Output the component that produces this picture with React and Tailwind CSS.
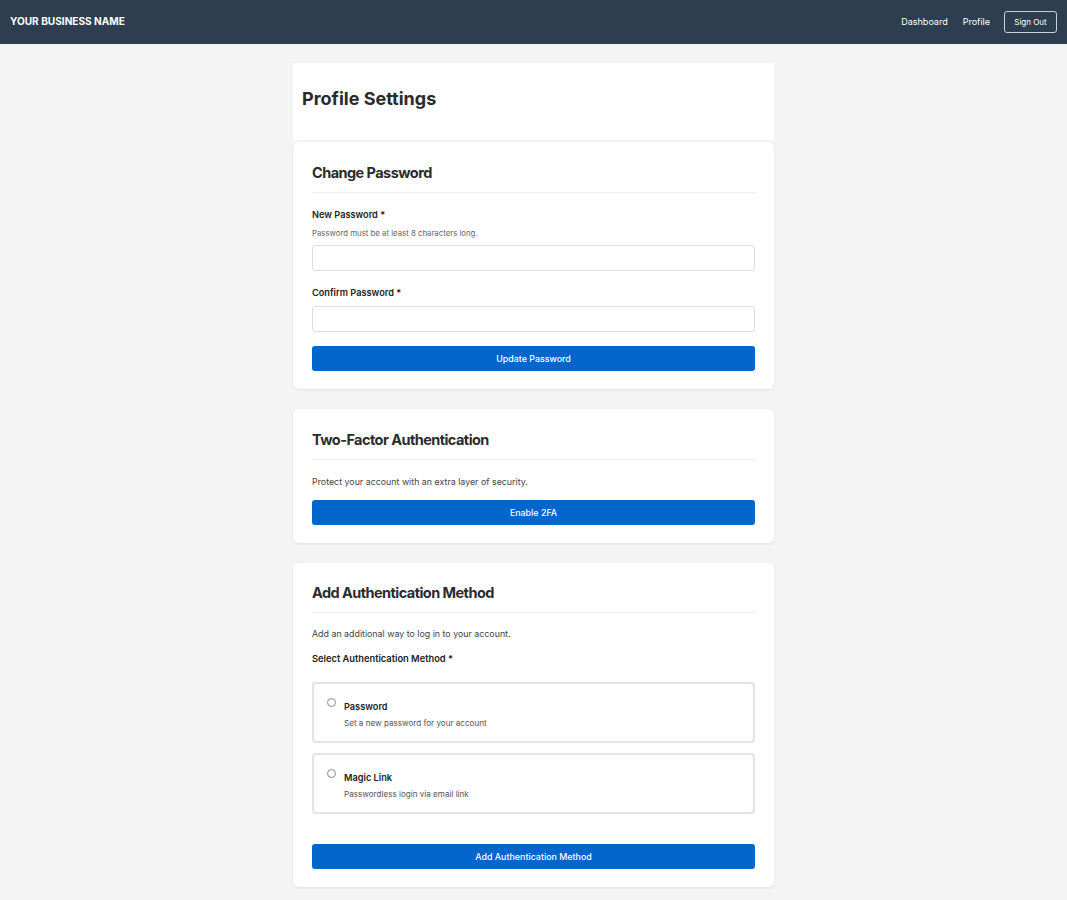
import React from "react";

function Option({ title, desc, mt }) {
  return (
    <label className={`${mt} flex items-start rounded-[4px] border-2 border-[#e3e3e3] bg-white pl-[13px] pr-4 pt-[12px] pb-[11px]`}>
      <span className="mt-[2px] h-[9px] w-[9px] shrink-0 rounded-full border border-[#8a8a8a] bg-white" />
      <span className="ml-[8px] flex flex-col">
        <span className="mt-[3px] text-[9.2px] font-semibold leading-[16px] text-[#222]">{title}</span>
        <span className="mt-[1px] text-[8.1px] leading-[14px] text-[#555]">{desc}</span>
      </span>
    </label>
  );
}

function Button({ children, mt }) {
  return (
    <button className={`${mt} flex h-[25px] w-full items-center justify-center rounded-[3px] bg-[#0066cc] text-[8.9px] font-medium text-white`}>
      {children}
    </button>
  );
}

function CardTitle({ children }) {
  return (
    <h2 className="border-b border-[#eeeeee] pb-[8px] text-[14.5px] font-bold leading-[22px] tracking-[-0.55px] text-[#2b2b2b]">
      {children}
    </h2>
  );
}

export default function App() {
  return (
    <div className="min-h-[900px] bg-[#f4f4f4] pb-10" style={{ fontFamily: "Inter, 'Liberation Sans', sans-serif" }}>
      <header className="flex h-[44px] items-center justify-between bg-[#2c3e50] pl-[10px] pr-[10px]">
        <div className="text-[10.1px] font-bold text-white">YOUR BUSINESS NAME</div>
        <nav className="flex items-center text-[9px] text-white">
          <a className="mr-[15px]">Dashboard</a>
          <a className="mr-[14px]">Profile</a>
          <button className="h-[22px] w-[53px] rounded-[3px] border border-[#c9d0d6] text-[8px] text-white">Sign Out</button>
        </nav>
      </header>

      <main className="mx-auto mt-[19px] w-[481px]">
        <div className="flex h-[77px] items-center bg-white px-[9px] pb-[6px]">
          <h1 className="text-[18px] font-bold text-[#2b2b2b]">Profile Settings</h1>
        </div>

        <section className="mt-[2px] rounded-[6px] bg-white px-[19px] pt-[20px] pb-[18px] shadow-[0_1px_3px_rgba(0,0,0,0.08)]">
          <CardTitle>Change Password</CardTitle>
          <div className="mt-[14px] text-[9.2px] font-semibold leading-[16px] text-[#222]">New Password *</div>
          <div className="mt-[3px] text-[7.8px] leading-[14px] text-[#666]">Password must be at least 8 characters long.</div>
          <input type="password" className="mt-[5px] block h-[26px] w-full rounded-[3px] border border-[#dddddd] bg-white" />
          <div className="mt-[14px] text-[9.2px] font-semibold leading-[16px] text-[#222]">Confirm Password *</div>
          <input type="password" className="mt-[5px] block h-[26px] w-full rounded-[3px] border border-[#dddddd] bg-white" />
          <Button mt="mt-[14px]">Update Password</Button>
        </section>

        <section className="mt-[20px] rounded-[6px] bg-white px-[19px] pt-[20px] pb-[18px] shadow-[0_1px_3px_rgba(0,0,0,0.08)]">
          <CardTitle>Two-Factor Authentication</CardTitle>
          <p className="mt-[13px] text-[8.85px] leading-[18px] text-[#444]">Protect your account with an extra layer of security.</p>
          <Button mt="mt-[9px]">Enable 2FA</Button>
        </section>

        <section className="mt-[20px] rounded-[6px] bg-white px-[19px] pt-[19px] pb-[18px] shadow-[0_1px_3px_rgba(0,0,0,0.08)]">
          <CardTitle>Add Authentication Method</CardTitle>
          <p className="mt-[12px] text-[8.85px] leading-[18px] text-[#444]">Add an additional way to log in to your account.</p>
          <div className="mt-[8px] text-[9.3px] font-semibold leading-[16px] text-[#222]">Select Authentication Method *</div>
          <Option mt="mt-[15px]" title="Password" desc="Set a new password for your account" />
          <Option mt="mt-[10px]" title="Magic Link" desc="Passwordless login via email link" />
          <Button mt="mt-[30px]">Add Authentication Method</Button>
        </section>
      </main>
    </div>
  );
}
